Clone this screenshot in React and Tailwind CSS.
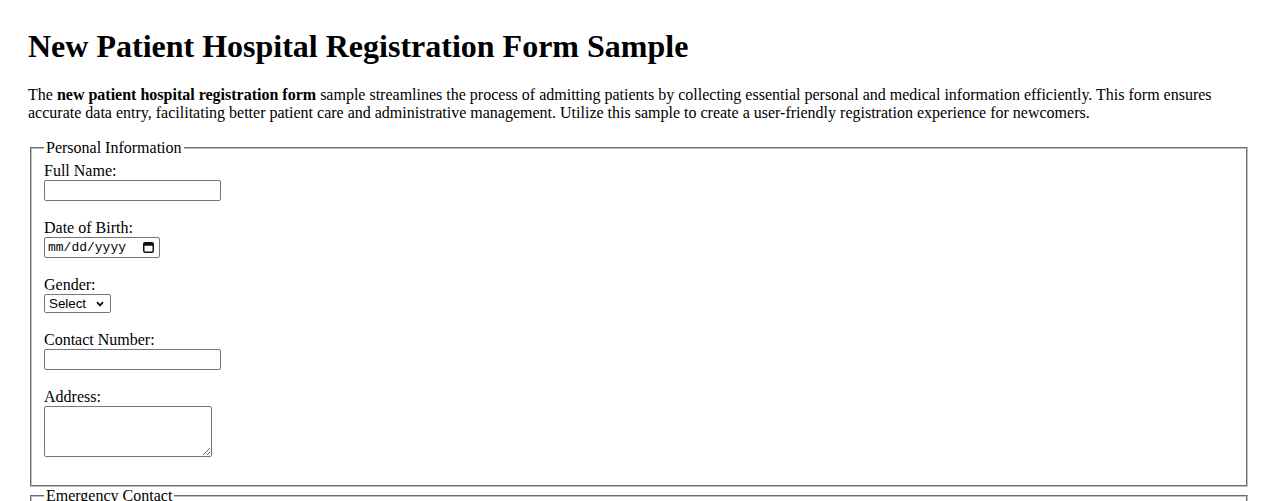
import React from "react";

const Field = ({ label, children }) => (
  <div className="mb-[18px]">
    <label className="block h-[18px] leading-[18px]">{label}</label>
    {children}
  </div>
);

const TextInput = ({ w = "w-[177px]" }) => (
  <input
    type="text"
    className={`block ${w} h-[21px] border border-[#767676] rounded-[2px] px-[2px] text-[13px] bg-white`}
    style={{ fontFamily: '"Liberation Sans", Arial, sans-serif' }}
  />
);

const DateInput = () => (
  <div className="flex items-center justify-between w-[116px] h-[21px] border border-[#767676] rounded-[2px] pl-[3px] pr-[4px] bg-white">
    <span className="text-[13px] leading-none text-black" style={{ fontFamily: '"Liberation Mono", monospace' }}>
      mm/dd/yyyy
    </span>
    <svg width="11" height="11" viewBox="0 0 11 11" className="mr-px">
      <rect x="0.75" y="0.75" width="9.5" height="9.5" rx="1.5" fill="none" stroke="#111" strokeWidth="1.5" />
      <rect x="0.75" y="0.75" width="9.5" height="3" fill="#111" />
    </svg>
  </div>
);

const SelectBox = () => (
  <div
    className="flex items-center w-[67px] h-[19px] border border-[#767676] rounded-[2px] pl-[4px] pr-[6px] bg-white text-[13.33px]"
    style={{ fontFamily: '"Liberation Sans", Arial, sans-serif' }}
  >
    <span className="flex-1 leading-none">Select</span>
    <svg width="8" height="6" viewBox="0 0 8 6">
      <path d="M1 1.2 L4 4.4 L7 1.2" fill="none" stroke="#111" strokeWidth="1.8" />
    </svg>
  </div>
);

export default function App() {
  return (
    <div
      className="bg-white text-black px-[28px] pt-[28px] pb-10 text-[16px]"
      style={{ fontFamily: '"Liberation Serif", "Times New Roman", serif' }}
    >
      <h1 className="text-[32px] font-bold leading-[37px] mb-[21px]">New Patient Hospital Registration Form Sample</h1>
      <p className="leading-[18.4px] mb-[16px]">
        The <b>new patient hospital registration form</b> sample streamlines the process of admitting patients by
        collecting essential personal and medical information efficiently. This form ensures accurate data entry,
        facilitating better patient care and administrative management. Utilize this sample to create a user-friendly
        registration experience for newcomers.
      </p>

      <form>
        <fieldset className="mx-[2px] border-2 border-[#c0c0c0] [border-style:groove] pt-[5px] px-[12px] pb-[10px]">
          <legend className="px-[2px] leading-[18.4px]">Personal Information</legend>
          <Field label="Full Name:">
            <TextInput />
          </Field>
          <Field label="Date of Birth:">
            <DateInput />
          </Field>
          <Field label="Gender:">
            <SelectBox />
          </Field>
          <Field label="Contact Number:">
            <TextInput />
          </Field>
          <Field label="Address:">
            <textarea className="block w-[168px] h-[51px] border border-[#767676] rounded-[2px] bg-white" />
          </Field>
        </fieldset>

        <fieldset className="mx-[2px] border-2 border-[#c0c0c0] [border-style:groove] pt-[5px] px-[12px] pb-[10px]">
          <legend className="px-[2px] leading-[18.4px]">Emergency Contact</legend>
          <Field label="Contact Name:">
            <TextInput />
          </Field>
          <Field label="Relationship:">
            <TextInput />
          </Field>
          <Field label="Contact Number:">
            <TextInput />
          </Field>
        </fieldset>
      </form>
    </div>
  );
}
